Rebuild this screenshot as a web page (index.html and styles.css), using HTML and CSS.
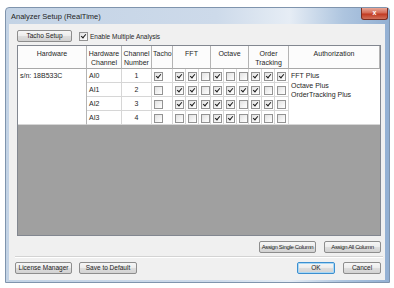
FILE: index.html
```html
<!DOCTYPE html>
<html lang="en">
<head>
  <meta charset="UTF-8">
  <title>Analyzer Setup (RealTime)</title>
  <link rel="stylesheet" href="styles.css">
</head>
<body>

  <div class="window">
    <!-- Barra de titulo -->
    <div class="titlebar">
      <span class="title">Analyzer Setup (RealTime)</span>
      <span class="close">x</span>
    </div>

    <div class="client">
      <div class="toolbar">
        <button class="btn tacho">Tacho Setup</button>
        <label class="check"><span class="cb on"></span>Enable Multiple Analysis</label>
      </div>

      <!-- Tabla de canales -->
      <div class="grid">
        <table>
          <colgroup>
            <col style="width:69px">
            <col style="width:35px">
            <col style="width:30px">
            <col style="width:21px">
            <col style="width:13px"><col style="width:13px"><col style="width:12px">
            <col style="width:13px"><col style="width:13px"><col style="width:12px">
            <col style="width:13px"><col style="width:13px"><col style="width:14px">
            <col>
          </colgroup>
          <thead>
            <tr>
              <th>Hardware</th>
              <th>Hardware<br>Channel</th>
              <th>Channel<br>Number</th>
              <th class="tacho-h">Tacho</th>
              <th colspan="3">FFT</th>
              <th colspan="3">Octave</th>
              <th colspan="3">Order<br>Tracking</th>
              <th>Authorization</th>
            </tr>
          </thead>
          <tbody>
            <tr>
              <td rowspan="4" class="sn">s/n: 18B533C</td>
              <td class="txt">AI0</td>
              <td class="num">1</td>
              <td class="c"><span class="cb on"></span></td>
              <td class="c"><span class="cb on"></span></td>
              <td class="c"><span class="cb on"></span></td>
              <td class="c"><span class="cb"></span></td>
              <td class="c"><span class="cb on"></span></td>
              <td class="c"><span class="cb"></span></td>
              <td class="c"><span class="cb"></span></td>
              <td class="c"><span class="cb on"></span></td>
              <td class="c"><span class="cb on"></span></td>
              <td class="c"><span class="cb on"></span></td>
              <td rowspan="4" class="auth">FFT Plus<br>Octave Plus<br>OrderTracking Plus</td>
            </tr>
            <tr>
              <td class="txt">AI1</td>
              <td class="num">2</td>
              <td class="c"><span class="cb"></span></td>
              <td class="c"><span class="cb on"></span></td>
              <td class="c"><span class="cb on"></span></td>
              <td class="c"><span class="cb"></span></td>
              <td class="c"><span class="cb on"></span></td>
              <td class="c"><span class="cb on"></span></td>
              <td class="c"><span class="cb on"></span></td>
              <td class="c"><span class="cb on"></span></td>
              <td class="c"><span class="cb"></span></td>
              <td class="c"><span class="cb"></span></td>
            </tr>
            <tr>
              <td class="txt">AI2</td>
              <td class="num">3</td>
              <td class="c"><span class="cb"></span></td>
              <td class="c"><span class="cb on"></span></td>
              <td class="c"><span class="cb on"></span></td>
              <td class="c"><span class="cb on"></span></td>
              <td class="c"><span class="cb on"></span></td>
              <td class="c"><span class="cb on"></span></td>
              <td class="c"><span class="cb"></span></td>
              <td class="c"><span class="cb on"></span></td>
              <td class="c"><span class="cb on"></span></td>
              <td class="c"><span class="cb"></span></td>
            </tr>
            <tr>
              <td class="txt">AI3</td>
              <td class="num">4</td>
              <td class="c"><span class="cb"></span></td>
              <td class="c"><span class="cb"></span></td>
              <td class="c"><span class="cb"></span></td>
              <td class="c"><span class="cb"></span></td>
              <td class="c"><span class="cb on"></span></td>
              <td class="c"><span class="cb on"></span></td>
              <td class="c"><span class="cb"></span></td>
              <td class="c"><span class="cb on"></span></td>
              <td class="c"><span class="cb"></span></td>
              <td class="c"><span class="cb"></span></td>
            </tr>
          </tbody>
        </table>
      </div>

      <div class="assign">
        <button class="btn wide">Assign Single Column</button>
        <button class="btn wide">Assign All Column</button>
      </div>

      <div class="separator"></div>

      <div class="footer">
        <div class="group">
          <button class="btn license">License Manager</button>
          <button class="btn save">Save to Default</button>
        </div>
        <div class="group right">
          <button class="btn small ok">OK</button>
          <button class="btn small">Cancel</button>
        </div>
      </div>
    </div>
  </div>

</body>
</html>
```

FILE: styles.css
```css
body {
  margin: 0;
  background-color: #fff;
  font-family: "Liberation Sans", Arial, sans-serif;
  font-size: 7px;
  color: #262626;
}

.window {
  margin: 7px 0 0 5px;
  width: 385px;
  height: 276px;
  box-sizing: border-box;
  border: 1px solid #7f94ad;
  border-radius: 4px 4px 0 0;
  background: linear-gradient(to right, #c3d3e5, #cddaea 55%, #e6edf5 74%, #aec5df 88%, #93b0d3);
  display: flex;
  flex-direction: column;
}

.titlebar {
  height: 16px;
  display: flex;
  justify-content: space-between;
  align-items: flex-start;
}

.title {
  padding: 4px 0 0 5px;
  font-size: 7.5px;
  color: #1e1e1e;
}

.close {
  width: 25px;
  height: 11px;
  margin-right: 1px;
  background: linear-gradient(#e9a898, #d46a55 45%, #c23a22 55%, #d0705a);
  border: 1px solid #7a2c20;
  border-top: none;
  border-radius: 0 0 3px 3px;
  color: #fff;
  font-weight: bold;
  text-align: center;
  line-height: 10px;
  font-size: 7px;
}

.client {
  flex: 1;
  margin: 0 4px 2px 3px;
  padding: 6px 4px 0 8px;
  background-color: #f0f0f0;
}

.toolbar {
  display: flex;
  align-items: center;
  gap: 7px;
}

.check {
  display: flex;
  align-items: center;
  gap: 2px;
  font-size: 6.5px;
}

/* Botones */
.btn {
  height: 12px;
  padding: 0;
  font-family: "Liberation Sans", Arial, sans-serif;
  font-size: 6.5px;
  color: #222;
  line-height: 10px;
  white-space: nowrap;
  overflow: hidden;
  border: 1px solid #8d8d8d;
  border-radius: 2px;
  background: linear-gradient(#f6f6f6, #ececec 50%, #dedede 50%, #d2d2d2);
}

.tacho { width: 55px; }
.license { width: 57px; }
.save { width: 58px; }
.small { width: 38px; }

.wide {
  width: 57px;
  font-size: 6px;
  letter-spacing: -0.35px;
}

.ok {
  border-color: #3c8fd0;
  box-shadow: inset 0 0 0 1px #a9d8f5;
}

/* Casillas */
.cb {
  position: relative;
  display: inline-block;
  width: 7px;
  height: 7px;
  border: 1px solid #939393;
  background: linear-gradient(135deg, #e2e2e2, #fff);
  vertical-align: middle;
}

.cb.on::after {
  content: "";
  position: absolute;
  left: 2px;
  top: 0;
  width: 2px;
  height: 4px;
  border: solid #1c1c1c;
  border-width: 0 1.5px 1.5px 0;
  transform: rotate(40deg);
}

/* Tabla */
.grid {
  margin-top: 3px;
  height: 191px;
  box-sizing: border-box;
  border: 1px solid #828790;
  background-color: #a0a0a0;
}

table {
  width: 100%;
  table-layout: fixed;
  border-collapse: separate;
  border-spacing: 0;
  background-color: #fff;
}

thead tr {
  height: 23px;
}

th {
  padding: 3px 0 0;
  vertical-align: top;
  font-weight: normal;
  line-height: 9px;
  text-align: center;
  background-color: #fcfcfc;
  border-right: 1px solid #b4b4b4;
  border-bottom: 1px solid #a8a8a8;
}

th.tacho-h {
  text-align: left;
  padding-left: 1px;
  overflow: hidden;
  white-space: nowrap;
}

tbody tr {
  height: 14px;
}

td {
  padding: 0;
  line-height: 13px;
  border-right: 1px solid #d6d6d6;
  border-bottom: 1px solid #d6d6d6;
}

td.c {
  padding-left: 2px;
}

td.txt {
  padding-left: 2px;
}

td.num {
  text-align: center;
}

td.sn {
  vertical-align: top;
  padding-left: 2px;
  border-right-color: #b4b4b4;
}

td.auth {
  vertical-align: top;
  padding: 2px 0 0 2px;
  line-height: 9.5px;
  border-right: none;
}

.assign {
  margin-top: 5px;
  display: flex;
  justify-content: flex-end;
  gap: 8px;
}

.separator {
  margin: 3px -2px 0 -2px;
  border-top: 1px solid #d3d3d3;
  border-bottom: 1px solid #fff;
}

.footer {
  margin: 4px 0 0 -2px;
  display: flex;
  justify-content: space-between;
}

.group {
  display: flex;
  gap: 7px;
}

.group.right {
  gap: 8px;
}
```
